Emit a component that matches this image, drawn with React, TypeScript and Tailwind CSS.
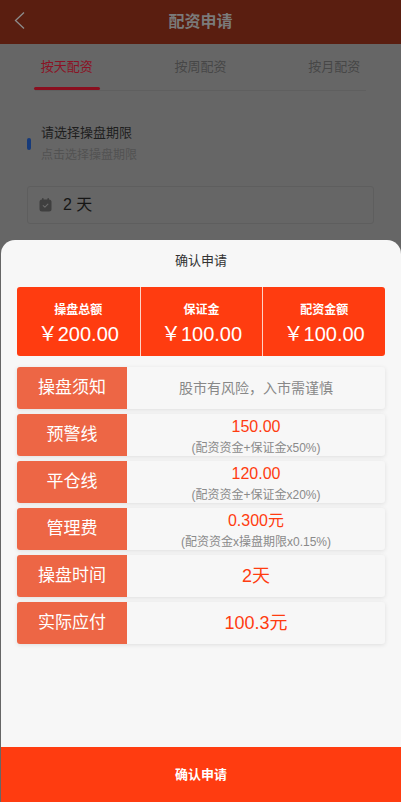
import React from "react";

const font = { fontFamily: '"Liberation Sans", "Noto Sans CJK SC", sans-serif' };

const stats = [
  { label: "操盘总额", value: "￥200.00" },
  { label: "保证金", value: "￥100.00" },
  { label: "配资金额", value: "￥100.00" },
];

const rows: { label: string; value: string; sub?: string; kind: "note" | "sub" | "big" }[] = [
  { label: "操盘须知", value: "股市有风险，入市需谨慎", kind: "note" },
  { label: "预警线", value: "150.00", sub: "(配资资金+保证金x50%)", kind: "sub" },
  { label: "平仓线", value: "120.00", sub: "(配资资金+保证金x20%)", kind: "sub" },
  { label: "管理费", value: "0.300元", sub: "(配资资金x操盘期限x0.15%)", kind: "sub" },
  { label: "操盘时间", value: "2天", kind: "big" },
  { label: "实际应付", value: "100.3元", kind: "big" },
];

function CalendarIcon() {
  return (
    <svg width="13" height="14" viewBox="0 0 13 14">
      <rect x="0.5" y="1.5" width="12" height="12" rx="2.5" fill="#3f3f3f" />
      <rect x="3" y="0" width="1.6" height="3" rx="0.8" fill="#3f3f3f" />
      <rect x="8.4" y="0" width="1.6" height="3" rx="0.8" fill="#3f3f3f" />
      <path d="M4.2 7.6 L5.9 9.2 L8.9 6.2" fill="none" stroke="#6a6a6a" strokeWidth="1.1" strokeLinecap="round" strokeLinejoin="round" />
    </svg>
  );
}

export default function App() {
  return (
    <div className="relative h-[802px] w-[401px] overflow-hidden bg-[#666666]" style={font}>
      {/* dimmed page behind the sheet */}
      <div className="flex h-[44px] items-center justify-center relative bg-[#5a1e10]">
        <svg className="absolute left-[13px] top-[11px]" width="13" height="19" viewBox="0 0 13 19">
          <polyline points="11,1.5 2.5,9.5 11,17.5" fill="none" stroke="#8c8c8c" strokeWidth="1.3" />
        </svg>
        <span className="text-[16px] font-bold text-[#7a7a7a]">配资申请</span>
      </div>

      <div className="grid grid-cols-3 h-[46px]">
        {["按天配资", "按周配资", "按月配资"].map((t, i) => (
          <div key={t} className="flex flex-col items-center">
            <div className={`pt-[14px] text-[13px] leading-[18px] ${i === 0 ? "text-[#8b1224]" : "text-[#474747]"}`}>{t}</div>
            {i === 0 && <div className="mt-auto h-[3px] w-[66px] rounded-full bg-[#8a0f1f]" />}
          </div>
        ))}
      </div>
      <div className="mx-[35px] h-px bg-[#5f5f5f]" />

      <div className="flex items-center gap-[10px] pl-[27px] pt-[32px]">
        <div className="h-[12px] w-[4px] rounded-[2px] bg-[#163a7a]" />
        <div>
          <div className="text-[13px] leading-[20px] text-[#1e1e1e]">请选择操盘期限</div>
          <div className="mt-[2px] text-[12px] leading-[20px] text-[#525252]">点击选择操盘期限</div>
        </div>
      </div>

      <div className="mx-[27px] mt-[21px] flex h-[38px] items-center gap-[11px] rounded-[3px] border border-[#5e5e5e] pl-[11px]">
        <CalendarIcon />
        <span className="text-[16px] text-[#161616]">2 天</span>
      </div>

      {/* bottom sheet */}
      <div className="absolute bottom-0 left-[1px] right-0 flex h-[562px] flex-col rounded-t-[14px] bg-[#f7f7f7]">
        <div className="pt-[12px] text-center text-[13px] leading-[18px] text-[#333333]">确认申请</div>

        <div className="mx-[16px] mt-[17px] grid h-[69px] grid-cols-3 rounded-[3px] bg-[#ff3c10] text-white">
          {stats.map((s, i) => (
            <div key={s.label} className={`flex flex-col items-center pt-[15px] ${i > 0 ? "border-l border-[#ffd2c4]" : ""}`}>
              <div className="text-[12px] font-bold leading-[16px]">{s.label}</div>
              <div className="mt-[4px] text-[20px] leading-[24px]">{s.value}</div>
            </div>
          ))}
        </div>

        <div className="mx-[16px] mt-[11px] flex flex-col gap-[5px]">
          {rows.map((r) => (
            <div key={r.label} className="flex h-[42px] overflow-hidden rounded-[3px] bg-[#f7f7f7] shadow-[0_1px_4px_rgba(0,0,0,0.1)]">
              <div className="flex w-[110px] items-center justify-center bg-[#ed6645] text-[17px] text-white">{r.label}</div>
              <div className="flex flex-1 flex-col items-center justify-center">
                {r.kind === "note" && <div className="text-[14px] text-[#888888]">{r.value}</div>}
                {r.kind === "sub" && (
                  <>
                    <div className="mt-[2px] text-[16px] leading-[20px] text-[#ff3c10]">{r.value}</div>
                    <div className="mt-[3px] text-[12px] leading-[16px] text-[#8a8a8a]">{r.sub}</div>
                  </>
                )}
                {r.kind === "big" && <div className="text-[18px] text-[#ff3c10]">{r.value}</div>}
              </div>
            </div>
          ))}
        </div>

        <button className="mt-auto h-[55px] w-full bg-[#ff3c10] text-[13px] font-bold text-white">确认申请</button>
      </div>
    </div>
  );
}
